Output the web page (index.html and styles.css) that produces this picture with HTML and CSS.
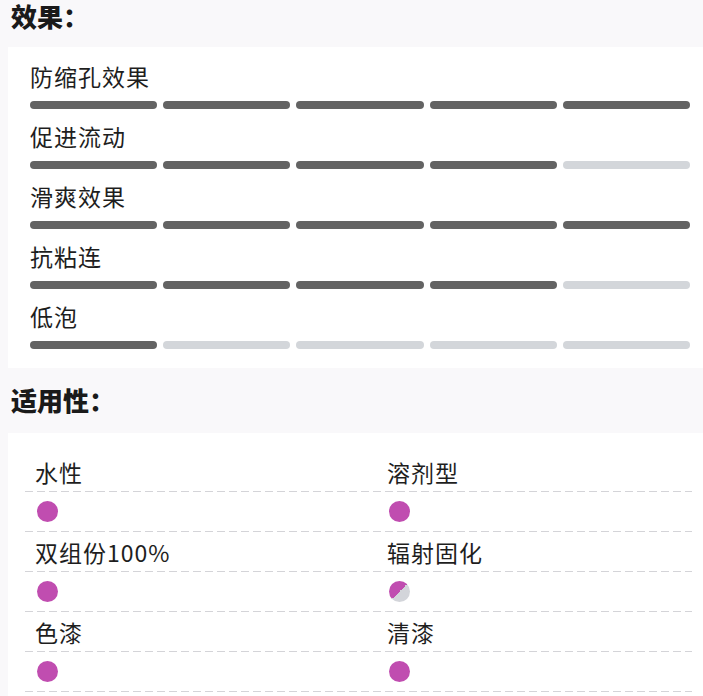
FILE: index.html
```html
<!DOCTYPE html>
<html lang="zh-CN">
<head>
<meta charset="utf-8">
<title>效果与适用性</title>
<link rel="stylesheet" href="styles.css">
</head>
<body>
<div class="page">
  <h2 class="section-title first">效果：</h2>
  <div class="card effects">
    <div class="effect">
      <div class="effect-label">防缩孔效果</div>
      <div class="bars"><span class="bar on"></span><span class="bar on"></span><span class="bar on"></span><span class="bar on"></span><span class="bar on"></span></div>
    </div>
    <div class="effect">
      <div class="effect-label">促进流动</div>
      <div class="bars"><span class="bar on"></span><span class="bar on"></span><span class="bar on"></span><span class="bar on"></span><span class="bar"></span></div>
    </div>
    <div class="effect">
      <div class="effect-label">滑爽效果</div>
      <div class="bars"><span class="bar on"></span><span class="bar on"></span><span class="bar on"></span><span class="bar on"></span><span class="bar on"></span></div>
    </div>
    <div class="effect">
      <div class="effect-label">抗粘连</div>
      <div class="bars"><span class="bar on"></span><span class="bar on"></span><span class="bar on"></span><span class="bar on"></span><span class="bar"></span></div>
    </div>
    <div class="effect">
      <div class="effect-label">低泡</div>
      <div class="bars"><span class="bar on"></span><span class="bar"></span><span class="bar"></span><span class="bar"></span><span class="bar"></span></div>
    </div>
  </div>

  <h2 class="section-title">适用性：</h2>
  <div class="card suit">
    <div class="suit-row"><div class="cell">水性</div><div class="cell">溶剂型</div></div>
    <div class="suit-row"><div class="cell"><span class="dot full"></span></div><div class="cell"><span class="dot full"></span></div></div>
    <div class="suit-row"><div class="cell">双组份100%</div><div class="cell">辐射固化</div></div>
    <div class="suit-row"><div class="cell"><span class="dot full"></span></div><div class="cell"><span class="dot half"></span></div></div>
    <div class="suit-row"><div class="cell">色漆</div><div class="cell">清漆</div></div>
    <div class="suit-row"><div class="cell"><span class="dot full"></span></div><div class="cell"><span class="dot full"></span></div></div>
  </div>
</div>
</body>
</html>
```

FILE: styles.css
```css
html, body {
  margin: 0;
  padding: 0;
  background: #f9f8fa;
}

body {
  font-family: "Noto Sans CJK SC", "Noto Sans", sans-serif;
  color: #1e1e1e;
}

.page {
  padding-left: 8px;
}

.section-title {
  margin: 0;
  padding: 16px 0 17px 3px;
  font-size: 26px;
  line-height: 32px;
  font-weight: 900;
  color: #1a1a1a;
}

.section-title.first {
  padding-top: 0;
  padding-bottom: 15px;
}

.card {
  background: #ffffff;
}

.effects {
  display: flex;
  flex-direction: column;
  gap: 12px;
  padding: 14px 13px 19px 22px;
}

.effect {
  display: flex;
  flex-direction: column;
  gap: 10px;
}

.effect-label {
  font-size: 23px;
  line-height: 30px;
  letter-spacing: 1px;
}

.bars {
  display: flex;
  gap: 6px;
}

.bar {
  flex: 1;
  height: 8px;
  border-radius: 4px;
  background: #d3d6da;
}

.bar.on {
  background: #636363;
}

.suit {
  padding: 19px 11px 19px 17px;
}

.suit-row {
  display: grid;
  grid-template-columns: 352px 1fr;
  height: 40px;
  box-sizing: border-box;
  padding-bottom: 1px;
  background-image: repeating-linear-gradient(to right, #d4d4d8 0 8px, transparent 8px 12px);
  background-size: 100% 1px;
  background-position: left bottom;
  background-repeat: no-repeat;
}

.cell {
  display: flex;
  align-items: center;
  padding-left: 10px;
  font-size: 23px;
  letter-spacing: 1px;
}

.dot {
  width: 21px;
  height: 21px;
  margin-left: 2px;
  border-radius: 50%;
}

.dot.full {
  background: #c04db0;
}

.dot.half {
  background: linear-gradient(135deg, #c04db0 50%, #d3d5da 50%);
}
```
